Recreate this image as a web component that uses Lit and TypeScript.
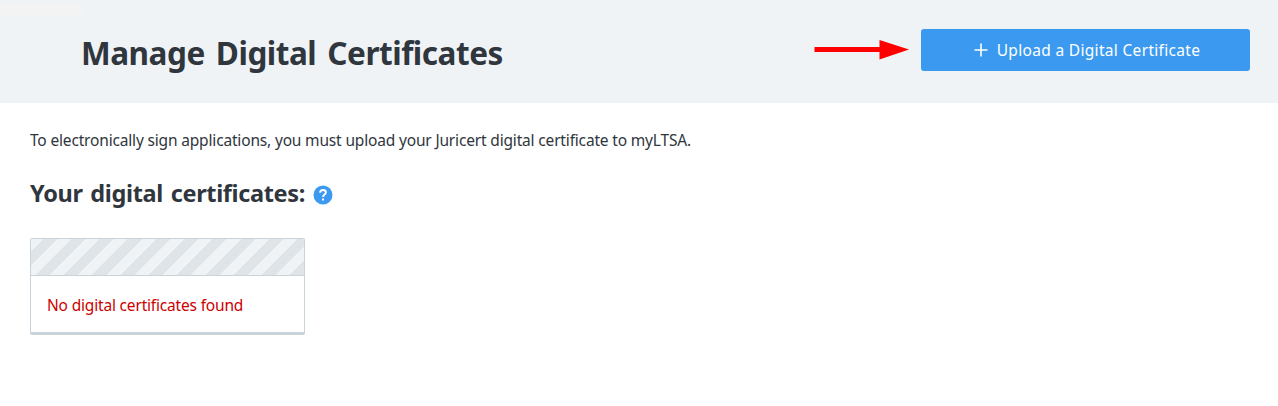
import { LitElement, html, css } from "lit";
import { customElement } from "lit/decorators.js";

@customElement("app-root")
export class AppRoot extends LitElement {
  static styles = css`
    :host {
      display: block;
      height: 406px;
      background: #fff;
      color: #2f363d;
      font-family: "Noto Sans", "Open Sans", sans-serif;
      overflow: hidden;
    }
    .header {
      position: relative;
      display: flex;
      align-items: center;
      height: 103px;
      padding: 0 28px 0 81px;
      box-sizing: border-box;
      background: #eff3f6;
    }
    .patch {
      position: absolute;
      left: 0;
      top: 3px;
      width: 82px;
      height: 14px;
      background: #f3f3f3;
    }
    h1, h2, p { margin: 0; white-space: nowrap; }
    h1 {
      flex: 1;
      font-size: 31.5px;
      line-height: 44px;
      font-weight: 700;
      letter-spacing: -0.48px;
      word-spacing: 3.4px;
      padding-top: 3px;
    }
    .arrow { display: block; margin: -4px 12px 0 0; }
    button {
      display: flex;
      align-items: center;
      justify-content: center;
      gap: 9px;
      width: 329px;
      height: 42px;
      margin: 0 0 3px;
      padding: 0 0 0 3px;
      border: 0;
      border-radius: 3px;
      background: #3b9af0;
      color: #fff;
      font: 400 15.5px/22px "Noto Sans", sans-serif;
      letter-spacing: 0.32px;
      white-space: nowrap;
    }
    main { padding: 26px 30px 0; }
    .intro { font-size: 15.5px; line-height: 22px; letter-spacing: -0.17px; }
    .section { display: flex; align-items: center; gap: 8px; margin-top: 26px; height: 32px; }
    h2 { font-size: 23.5px; line-height: 32px; font-weight: 700; letter-spacing: -0.35px; word-spacing: 2px; }
    .help { margin-top: 4px; }
    .card {
      width: 275px;
      height: 97px;
      box-sizing: border-box;
      margin-top: 29px;
      border: 1px solid #c8d3da;
      border-bottom-width: 3px;
      border-radius: 2px;
    }
    .stripes {
      height: 36px;
      border-bottom: 1px solid #c8d3da;
      background: repeating-linear-gradient(-45deg, #dfe4e8 0 10px, #eff3f6 10px 20px);
      background-clip: padding-box;
    }
    .empty { color: #cc0000; font-size: 15.5px; line-height: 22px; letter-spacing: -0.18px; padding: 18px 16px; }
    svg { flex: none; display: block; }
  `;

  render() {
    return html`
      <header class="header">
        <div class="patch"></div>
        <h1>Manage Digital Certificates</h1>
        <svg class="arrow" width="95" height="20" viewBox="0 0 95 20">
          <path d="M.5 7H65.500V0L95 9.600 65.500 19.500V12H.5z" fill="#f00" />
        </svg>
        <button>
          <svg width="14" height="14" viewBox="0 0 14 14">
            <path d="M7 .5v13M.5 7h13" stroke="#fff" stroke-width="1.6" />
          </svg>
          <span>Upload a Digital Certificate</span>
        </button>
      </header>
      <main>
        <p class="intro">To electronically sign applications, you must upload your Juricert digital certificate to myLTSA.</p>
        <div class="section">
          <h2>Your digital certificates:</h2>
          <svg class="help" width="20" height="20" viewBox="0 0 20 20">
            <circle cx="10" cy="10" r="9.5" fill="#3b9af0" />
            <path d="M7.100 7.800C7.100 6 8.300 5 10 5s2.900 1 2.900 2.500C12.900 9.400 10 9.600 10 12" fill="none" stroke="#fff" stroke-width="1.9" />
            <rect x="9" y="13.500" width="2" height="2" fill="#fff" />
          </svg>
        </div>
        <section class="card">
          <div class="stripes"></div>
          <p class="empty">No digital certificates found</p>
        </section>
      </main>
    `;
  }
}
